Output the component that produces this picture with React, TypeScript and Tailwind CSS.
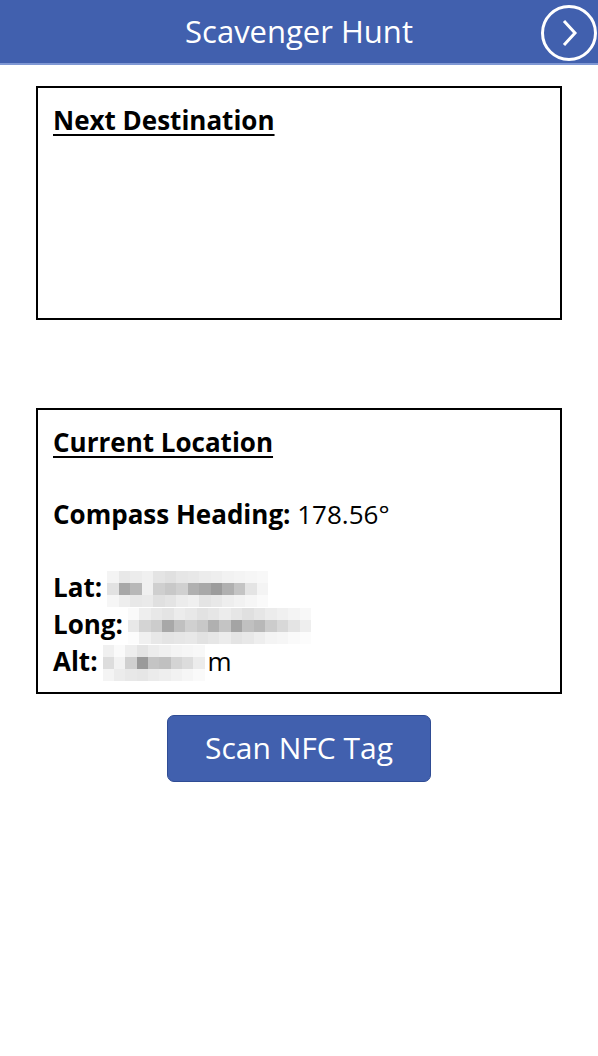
import React from "react";

const Blur = ({ rows, width }: { rows: string[][]; width: number }) => (
  <span className="inline-flex flex-col align-middle" style={{ width }}>
    {rows.map((r, i) => (
      <span key={i} className="flex h-[12px]">
        {r.map((c, j) => (
          <span key={j} className="flex-1" style={{ background: c }} />
        ))}
      </span>
    ))}
  </span>
);

const latRows = [
  ["#f4f4f4", "#e8e8e8", "#ececec", "#f0f0f0", "#e4e4e4", "#e0e0e0", "#e6e6e6", "#e8e8e8", "#ececec", "#eeeeee", "#f2f2f2", "#f4f4f4", "#f6f6f6", "#f8f8f8"],
  ["#e2e2e2", "#a8a8a8", "#b8b8b8", "#f0f0f0", "#cfcfcf", "#c8c8c8", "#d0d0d0", "#b0b0b0", "#a8a8a8", "#9c9c9c", "#b0b0b0", "#c4c4c4", "#e4e4e4", "#f4f4f4"],
  ["#f6f6f6", "#eeeeee", "#e8e8e8", "#eaeaea", "#e0e0e0", "#e4e4e4", "#ececec", "#f0f0f0", "#e4e4e4", "#e8e8e8", "#eeeeee", "#f2f2f2", "#f6f6f6", "#fafafa"],
];
const longRows = [
  ["#fafafa", "#eeeeee", "#e8e8e8", "#e4e4e4", "#ececec", "#e8e8e8", "#e2e2e2", "#e6e6e6", "#ececec", "#e6e6e6", "#e0e0e0", "#e6e6e6", "#ececec", "#f0f0f0", "#f4f4f4", "#f8f8f8"],
  ["#e8e8e8", "#d4d4d4", "#cccccc", "#a8a8a8", "#c0c0c0", "#d0d0d0", "#c8c8c8", "#b0b0b0", "#c4c4c4", "#a4a4a4", "#c0c0c0", "#b8b8b8", "#cccccc", "#d8d8d8", "#e4e4e4", "#eeeeee"],
  ["#fcfcfc", "#f0f0f0", "#e8e8e8", "#e4e4e4", "#e6e6e6", "#e8e8e8", "#e2e2e2", "#e6e6e6", "#ececec", "#e4e4e4", "#e8e8e8", "#eeeeee", "#f4f4f4", "#f6f6f6", "#fafafa", "#fcfcfc"],
];
const altRows = [
  ["#f0f0f0", "#fafafa", "#eeeeee", "#e4e4e4", "#ececec", "#f0f0f0", "#f4f4f4", "#f6f6f6", "#f8f8f8"],
  ["#dddddd", "#f2f2f2", "#d0d0d0", "#9a9a9a", "#c4c4c4", "#c0c0c0", "#d4d4d4", "#dcdcdc", "#ececec"],
  ["#f4f4f4", "#ececec", "#e8e8e8", "#e6e6e6", "#ebebeb", "#eeeeee", "#f2f2f2", "#f6f6f6", "#fafafa"],
];

export default function App() {
  return (
    <div className="w-[598px] h-[1056px] bg-white text-black" style={{ fontFamily: '"Open Sans", "Noto Sans", sans-serif' }}>
      <header className="relative h-[65px] bg-[#4160ae] border-b-2 border-[#7f98d4] flex items-center justify-center">
        <h1 className="text-[31px] text-white leading-none pb-[1px]">Scavenger Hunt</h1>
        <svg className="absolute right-[0px] top-[4px]" width="58" height="58" viewBox="0 0 58 58">
          <circle cx="29" cy="29" r="26.5" fill="none" stroke="white" strokeWidth="3" />
          <path d="M24 17 L35 29 L24 41" fill="none" stroke="white" strokeWidth="3" />
        </svg>
      </header>

      <div className="px-[36px] pt-[21px]">
        <section className="h-[234px] border-2 border-black px-[15px] pt-[16px]">
          <h2 className="text-[26px] font-bold underline underline-offset-[4px] decoration-[2px] leading-[32px]">Next Destination</h2>
        </section>

        <section className="mt-[88px] h-[286px] border-2 border-black px-[15px] pt-[16px] text-[26px] leading-[37px]">
          <h2 className="font-bold underline underline-offset-[4px] decoration-[2px] leading-[32px]">Current Location</h2>
          <p className="mt-[38px]"><span className="font-bold">Compass Heading:</span> 178.56°</p>
          <div className="mt-[36px]">
            <p className="flex items-center h-[37px]"><span className="font-bold">Lat:</span><span className="ml-[5px]"><Blur rows={latRows} width={161} /></span></p>
            <p className="flex items-center h-[37px]"><span className="font-bold">Long:</span><span className="ml-[5px]"><Blur rows={longRows} width={183} /></span></p>
            <p className="flex items-center h-[36px]"><span className="font-bold">Alt:</span><span className="ml-[5px]"><Blur rows={altRows} width={102} /></span><span className="ml-[3px]">m</span></p>
          </div>
        </section>

        <div className="flex justify-center mt-[21px]">
          <button className="w-[264px] h-[67px] rounded-[7px] bg-[#4160ae] border border-[#2f4c94] text-white text-[30px] leading-none pb-[2px]">Scan NFC Tag</button>
        </div>
      </div>
    </div>
  );
}
